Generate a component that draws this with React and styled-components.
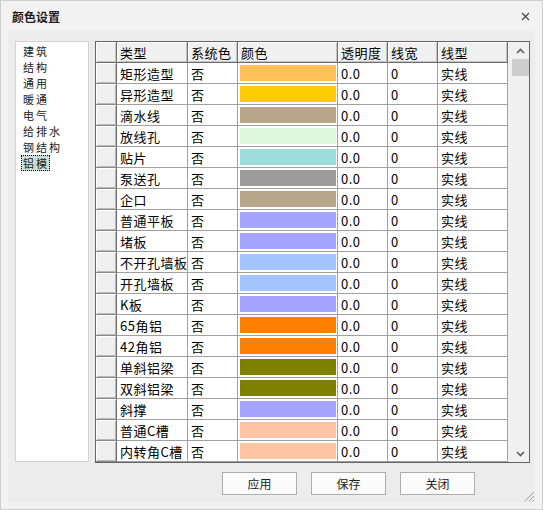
import React from 'react'
import styled, { createGlobalStyle } from 'styled-components'

const GlobalStyle = createGlobalStyle`
	html, body {
		margin: 0;
		padding: 0;
		background: #f0f0f0;
	}
	body {
		font-family: "Noto Sans CJK SC", "Liberation Sans", sans-serif;
	}
`

const categories = ['建筑', '结构', '通用', '暖通', '电气', '给排水', '钢结构', '铝模']

const rows = [
	['矩形造型', '#ffc05a'],
	['异形造型', '#ffcc00'],
	['滴水线', '#b9a68a'],
	['放线孔', '#dcf8dc'],
	['贴片', '#9cdcdc'],
	['泵送孔', '#9c9c9c'],
	['企口', '#b9a68a'],
	['普通平板', '#a4a4ff'],
	['堵板', '#a4a4ff'],
	['不开孔墙板', '#a4c4ff'],
	['开孔墙板', '#a4c4ff'],
	['K板', '#a4a4ff'],
	['65角铝', '#ff8000'],
	['42角铝', '#ff8000'],
	['单斜铝梁', '#808000'],
	['双斜铝梁', '#808000'],
	['斜撑', '#a4a4ff'],
	['普通C槽', '#ffc4a4'],
	['内转角C槽', '#ffc4a4'],
]

const columns = ['类型', '系统色', '颜色', '透明度', '线宽', '线型']

function App() {
	return (
		<>
			<GlobalStyle />
			<Window>
				<TitleBar>
					<Title>颜色设置</Title>
					<svg width="9" height="9" viewBox="0 0 9 9">
						<path d="M1 1 L8 8 M8 1 L1 8" stroke="#4a4a4a" strokeWidth="1.2" />
					</svg>
				</TitleBar>
				<Panel>
					<Main>
						<ListBox>
							{categories.map(c => (
								<ListItem key={c}>
									<ItemLabel selected={c === '铝模'}>{c}</ItemLabel>
								</ListItem>
							))}
						</ListBox>
						<Grid>
							<Table>
								<Row>
									<HeadCell />
									{columns.map(c => (
										<HeadCell key={c}>{c}</HeadCell>
									))}
								</Row>
								{rows.map(([name, color]) => (
									<Row key={name}>
										<RowHead />
										<Cell>{name}</Cell>
										<Cell>否</Cell>
										<SwatchCell>
											<Swatch color={color} />
										</SwatchCell>
										<Cell>0.0</Cell>
										<Cell>0</Cell>
										<Cell>实线</Cell>
									</Row>
								))}
							</Table>
							<ScrollBar>
								<ArrowBtn>
									<svg width="9" height="6" viewBox="0 0 9 6">
										<path d="M1 5 L4.5 1.5 L8 5" fill="none" stroke="#606060" strokeWidth="1.6" />
									</svg>
								</ArrowBtn>
								<Thumb />
								<Track />
								<ArrowBtn>
									<svg width="9" height="6" viewBox="0 0 9 6">
										<path d="M1 1 L4.5 4.5 L8 1" fill="none" stroke="#606060" strokeWidth="1.6" />
									</svg>
								</ArrowBtn>
							</ScrollBar>
						</Grid>
					</Main>
					<Footer>
						<Button>应用</Button>
						<Button>保存</Button>
						<Button>关闭</Button>
					</Footer>
				</Panel>
				<Grip>
					<svg width="12" height="12" viewBox="0 0 12 12">
						<path d="M11 2 L2 11 M11 6 L6 11 M11 10 L10 11" stroke="#a0a0a0" strokeWidth="1" />
					</svg>
				</Grip>
			</Window>
		</>
	)
}

const Window = styled.div`
	position: relative;
	box-sizing: border-box;
	width: 543px;
	height: 510px;
	border: 1px solid #cdcdcd;
	background: #f2f2f2;
	display: flex;
	flex-direction: column;
`

const TitleBar = styled.div`
	height: 30px;
	display: flex;
	align-items: center;
	justify-content: space-between;
	padding: 0 12px 0 11px;
`

const Title = styled.div`
	font-size: 12px;
	font-weight: 700;
	color: #1b1b1b;
`

const Panel = styled.div`
	flex: 1;
	margin: 0 7px 6px 7px;
	background: #ececec;
	padding: 10px 5px 0 7px;
	display: flex;
	flex-direction: column;
`

const Main = styled.div`
	display: flex;
	gap: 6px;
	height: 422px;
`

const ListBox = styled.div`
	box-sizing: border-box;
	width: 75px;
	height: 421px;
	background: #fff;
	border: 1px solid #d2d2d2;
	padding: 1px 0 0 5px;
`

const ListItem = styled.div`
	height: 16px;
	line-height: 16px;
	font-size: 11px;
	letter-spacing: 2px;
	color: #222;
`

const ItemLabel = styled.span`
	display: inline-block;
	vertical-align: top;
	line-height: 14px;
	padding: 0 0 0 1px;
	border: 1px dotted ${props => (props.selected ? '#000' : 'transparent')};
	background: ${props => (props.selected ? '#c8e0d6' : 'transparent')};
`

const Grid = styled.div`
	box-sizing: border-box;
	width: 435px;
	height: 422px;
	border: 1px solid #646464;
	background: #fff;
	display: flex;
`

const Table = styled.div`
	width: 412px;
	display: flex;
	flex-direction: column;
	overflow: hidden;
`

const Row = styled.div`
	display: grid;
	grid-template-columns: 21px 71px 50px 100px 50px 50px 70px;
	height: 21px;
	flex-shrink: 0;
`

const Cell = styled.div`
	box-sizing: border-box;
	border-right: 1px solid #a0a0a0;
	border-bottom: 1px solid #a0a0a0;
	padding-left: 3px;
	display: flex;
	align-items: center;
	white-space: nowrap;
	overflow: hidden;
	font-size: 13px;
	letter-spacing: 0.5px;
	color: #000;
	background: #fff;
`

const HeadCell = styled(Cell)`
	background: #f0f0f0;
	border-color: #6e6e6e;
	box-shadow: inset 1px 1px 0 #fff, inset -1px -1px 0 #c4c4c4;
`

const RowHead = styled(Cell)`
	background: #efefef;
	border-right-color: #6e6e6e;
	border-bottom-color: #8a8a8a;
	box-shadow: inset 1px 1px 0 #fff, inset -1px -1px 0 #b8b8b8;
`

const SwatchCell = styled(Cell)`
	padding: 2px 1px 2px 2px;
	align-items: stretch;
`

const Swatch = styled.div`
	flex: 1;
	background: ${props => props.color};
`

const ScrollBar = styled.div`
	width: 21px;
	background: #f0f0f0;
	display: flex;
	flex-direction: column;
	padding-left: 4px;
	box-sizing: border-box;
`

const ArrowBtn = styled.div`
	height: 17px;
	display: flex;
	align-items: center;
	justify-content: center;
`

const Thumb = styled.div`
	height: 17px;
	background: #cdcdcd;
`

const Track = styled.div`
	flex: 1;
`

const Footer = styled.div`
	display: flex;
	gap: 14px;
	margin-top: 9px;
	padding-left: 207px;
`

const Button = styled.button`
	box-sizing: border-box;
	width: 75px;
	height: 23px;
	background: #fbfbfb;
	border: 1px solid #adadad;
	font-family: inherit;
	font-size: 12px;
	color: #222;
	padding: 0;
`

const Grip = styled.div`
	position: absolute;
	right: 7px;
	bottom: 7px;
	width: 12px;
	height: 12px;
	display: flex;
`

export default App
